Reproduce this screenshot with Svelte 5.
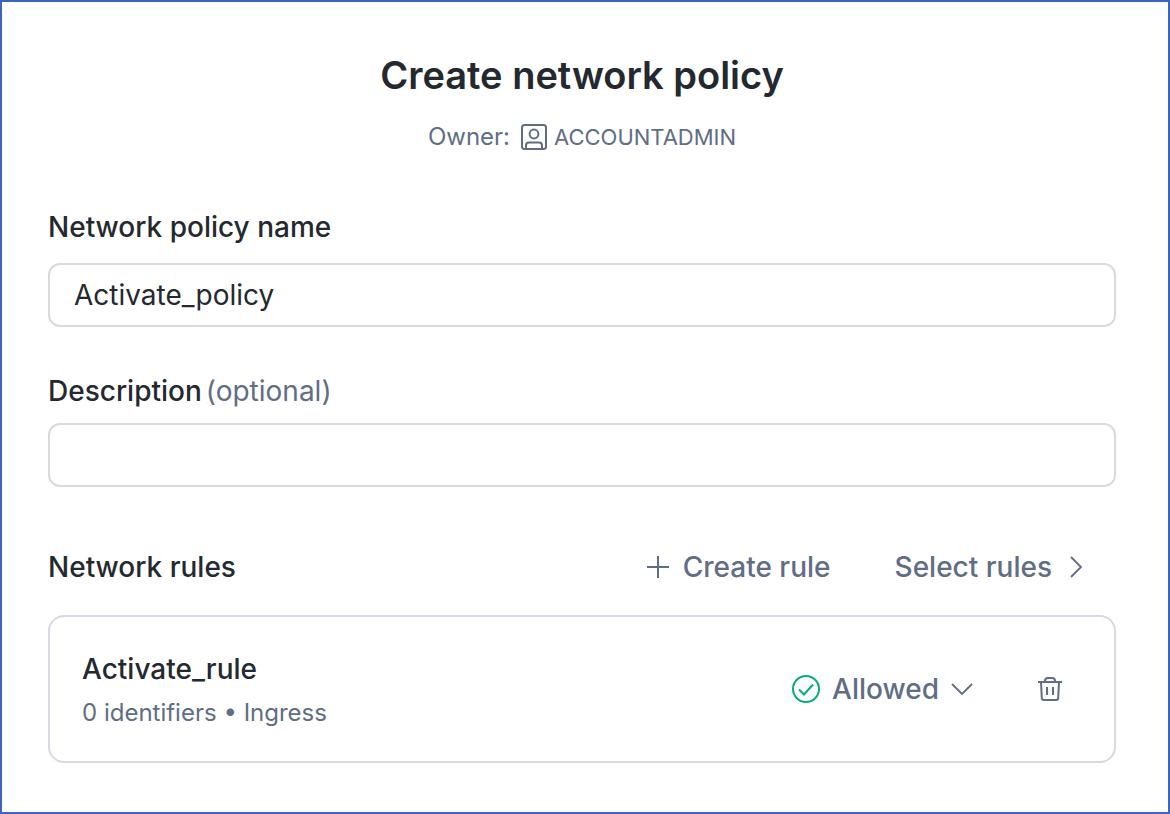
<script lang="ts">
  let name = $state('Activate_policy');
  let description = $state('');

  let rules = $state([
    { id: 1, name: 'Activate_rule', identifiers: 0, mode: 'Ingress', access: 'Allowed' }
  ]);

  function removeRule(id: number) {
    rules = rules.filter((rule) => rule.id !== id);
  }
</script>

<main class="dialog">
  <header>
    <h1>Create network policy</h1>
    <p class="owner">
      <span>Owner:</span>
      <svg width="26" height="26" viewBox="0 0 26 26" aria-hidden="true">
        <rect x="1" y="1" width="24" height="24" rx="2.5" />
        <circle cx="13" cy="10" r="4.4" />
        <path d="M5 25v-3.5a3 3 0 0 1 3-3h10a3 3 0 0 1 3 3V25" />
      </svg>
      <span class="role">ACCOUNTADMIN</span>
    </p>
  </header>

  <form onsubmit={(e) => e.preventDefault()}>
    <div class="field">
      <label for="policy-name">Network policy name</label>
      <input id="policy-name" type="text" autocomplete="off" spellcheck="false" bind:value={name} />
    </div>

    <div class="field optional">
      <label for="policy-description">Description <span>(optional)</span></label>
      <input id="policy-description" type="text" autocomplete="off" bind:value={description} />
    </div>

    <section>
      <div class="toolbar">
        <h2>Network rules</h2>
        <button type="button" class="action">
          <svg width="22" height="22" viewBox="0 0 22 22" aria-hidden="true">
            <path d="M11 0v22M0 11h22" />
          </svg>
          Create rule
        </button>
        <button type="button" class="action select-rules">
          Select rules
          <svg class="chevron" width="12" height="22" viewBox="0 0 12 22" aria-hidden="true">
            <path d="M1 1l10 10L1 21" />
          </svg>
        </button>
      </div>

      {#each rules as rule (rule.id)}
        <article class="rule">
          <div class="info">
            <h3>{rule.name}</h3>
            <p>{rule.identifiers} identifiers • {rule.mode}</p>
          </div>
          <div class="access">
            <svg class="check" width="28" height="28" viewBox="0 0 28 28" aria-hidden="true">
              <circle cx="14" cy="14" r="13" />
              <path d="M7 14.5l5 5L21 9.5" />
            </svg>
            <select aria-label="Access" bind:value={rule.access}>
              <option>Allowed</option>
              <option>Blocked</option>
            </select>
            <svg class="chevron" width="22" height="12" viewBox="0 0 22 12" aria-hidden="true">
              <path d="M1 1l10 10L21 1" />
            </svg>
          </div>
          <button type="button" class="delete" aria-label="Delete rule" onclick={() => removeRule(rule.id)}>
            <svg width="24" height="24" viewBox="0 0 24 24" aria-hidden="true">
              <path d="M0 5h24M3 5l.8 16a2 2 0 0 0 2 2h12.4a2 2 0 0 0 2-2L21 5M7 5V4a3 3 0 0 1 3-3h4a3 3 0 0 1 3 3v1M9 10v8M15 10v8" />
            </svg>
          </button>
        </article>
      {/each}
    </section>
  </form>
</main>

<style>
  :global(body) {
    margin: 0;
    background: #fff;
  }

  .dialog {
    box-sizing: border-box;
    min-height: 100vh;
    padding: 49px 52px 49px 46px;
    border: 2px solid #3b66bf;
    font-family: Inter, "Liberation Sans", sans-serif;
    font-size: 28px;
    line-height: 32px;
    color: #24292f;
  }

  h1,
  h2,
  h3,
  p {
    margin: 0;
  }

  h1 {
    font-size: 38px;
    line-height: 48px;
    font-weight: 600;
    text-align: center;
  }

  h2,
  h3 {
    font-size: 28px;
    font-weight: 500;
  }

  svg {
    flex: none;
    fill: none;
    stroke: currentColor;
    stroke-width: 2;
  }

  .chevron {
    stroke-width: 1.8;
  }

  .owner {
    display: flex;
    align-items: center;
    justify-content: center;
    margin-top: 22px;
    font-size: 24px;
    color: #616d84;
  }

  .owner svg {
    margin: 0 7px 0 11px;
  }

  .role {
    font-size: 22px;
  }

  form {
    margin-top: 58px;
  }

  .field {
    display: flex;
    flex-direction: column;
    gap: 20px;
  }

  .field.optional {
    gap: 16px;
    margin-top: 48px;
  }

  label {
    display: flex;
    gap: 4px;
    font-weight: 500;
  }

  label span {
    font-weight: 400;
    color: #616d84;
  }

  input {
    box-sizing: border-box;
    width: 100%;
    height: 64px;
    padding: 0 24px;
    border: 2px solid #d9d9e0;
    border-radius: 12px;
    background: #fff;
    font: inherit;
    color: inherit;
  }

  section {
    margin-top: 64px;
  }

  .toolbar {
    display: flex;
    align-items: center;
    margin-bottom: 32px;
    padding-right: 34px;
  }

  h2 {
    flex: 1;
  }

  button,
  select {
    padding: 0;
    border: 0;
    background: none;
    font: inherit;
    font-weight: 500;
    color: #616d84;
    cursor: pointer;
  }

  .action {
    display: flex;
    align-items: center;
    gap: 14px;
  }

  .select-rules {
    gap: 18px;
    margin-left: 64px;
  }

  .rule {
    display: flex;
    align-items: center;
    padding: 34px 52px 34px 32px;
    border: 2px solid #d5dae2;
    border-radius: 16px;
  }

  .info {
    flex: 1;
    padding-top: 2px;
  }

  .info p {
    margin-top: 14px;
    font-size: 24px;
    line-height: 28px;
    color: #616d84;
  }

  .access {
    display: flex;
    align-items: center;
    gap: 12px;
    color: #616d84;
  }

  .check {
    color: #0aab7c;
  }

  select {
    appearance: none;
    field-sizing: content;
  }

  .delete {
    display: flex;
    margin-left: 65px;
  }
</style>
